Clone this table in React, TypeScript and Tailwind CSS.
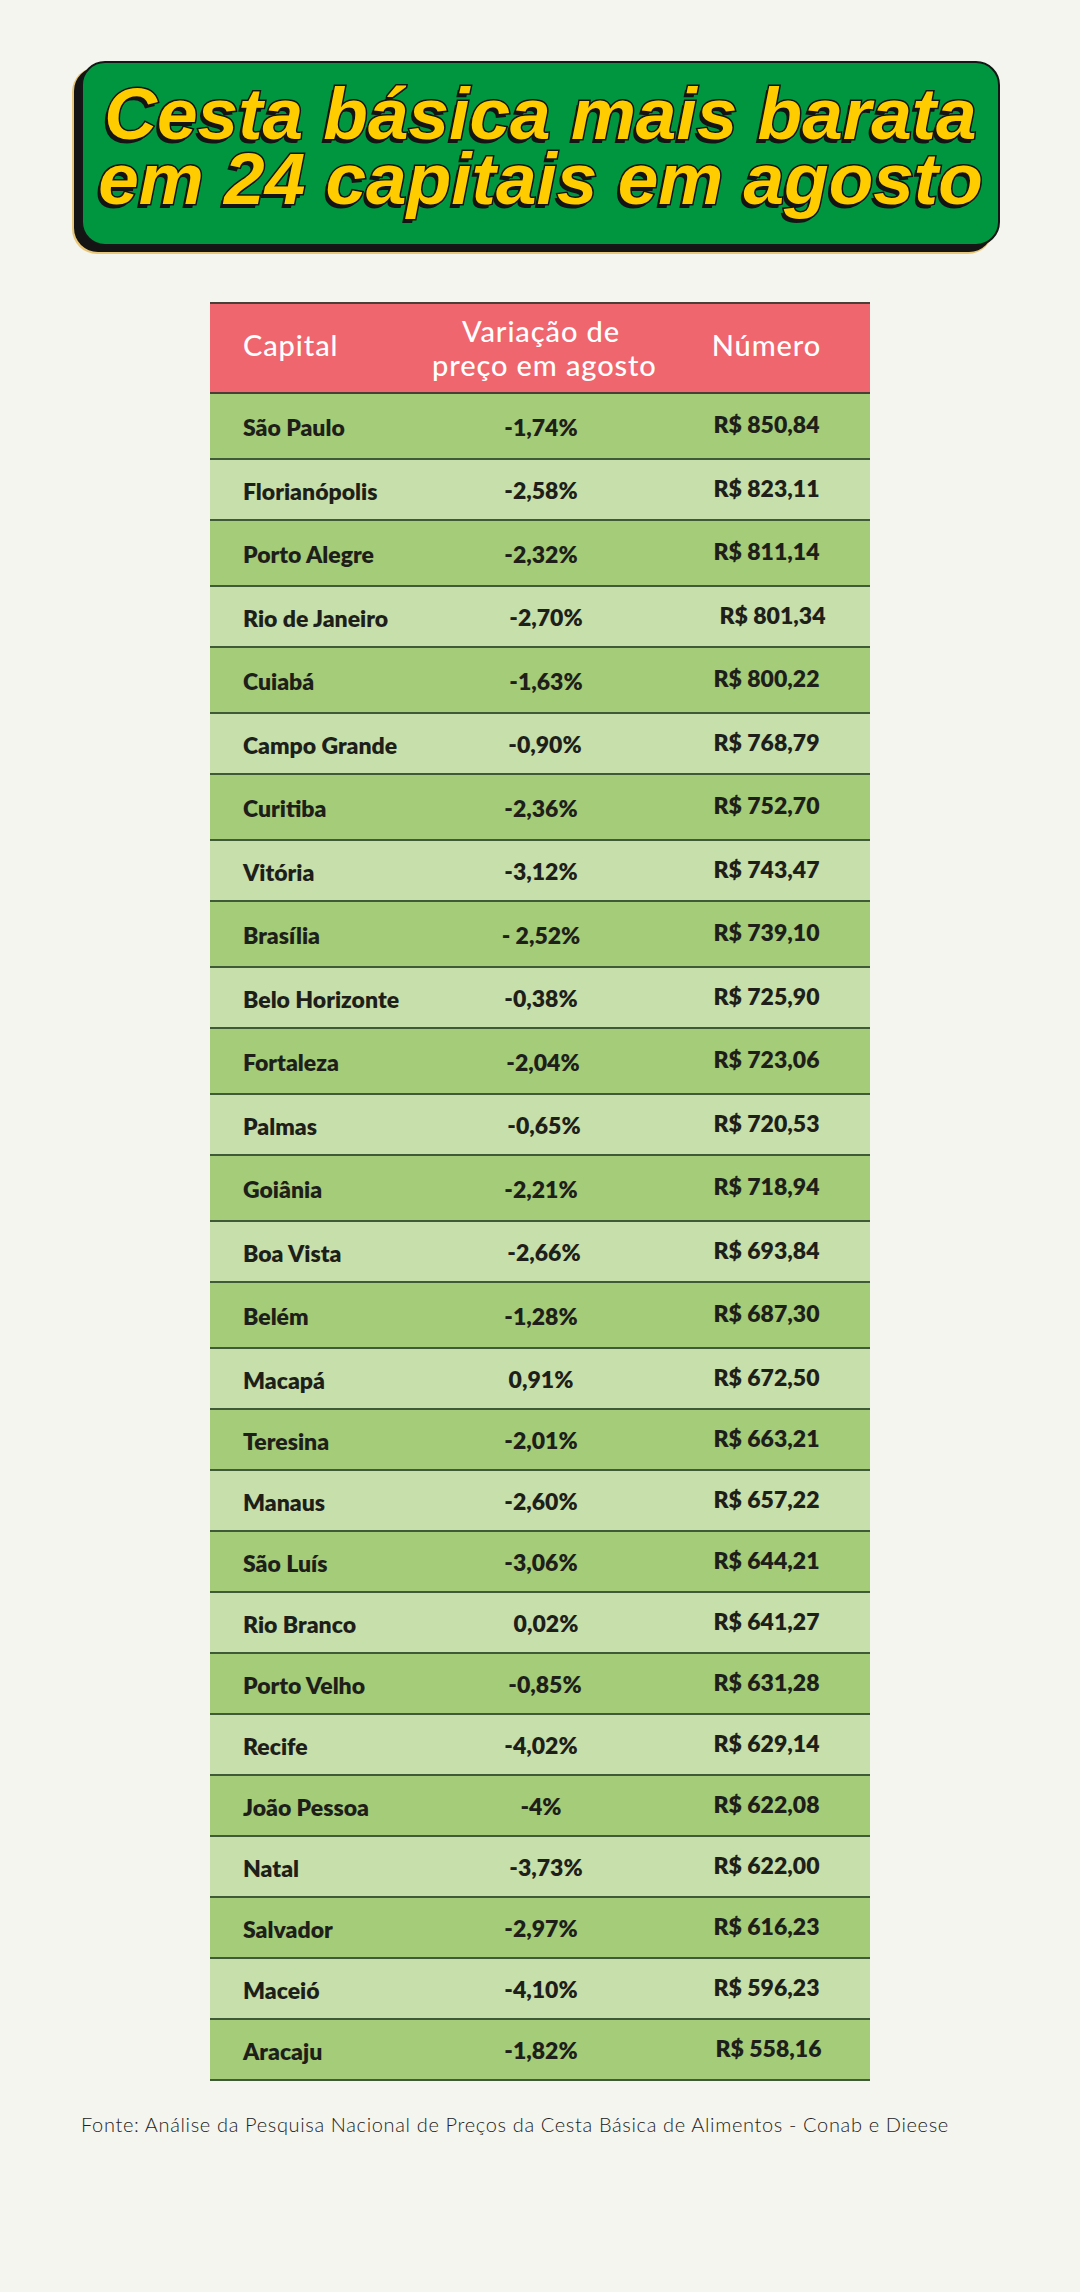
import React from "react";

type Row = {
  city: string;
  change: string;
  price: string;
  tall?: boolean;
  changeShift?: string;
  priceShift?: string;
};

const ROWS: Row[] = [
  { city: "São Paulo", change: "-1,74%", price: "R$ 850,84", tall: true },
  { city: "Florianópolis", change: "-2,58%", price: "R$ 823,11" },
  { city: "Porto Alegre", change: "-2,32%", price: "R$ 811,14", tall: true },
  { city: "Rio de Janeiro", change: "-2,70%", price: "R$ 801,34", changeShift: "pl-[12px]", priceShift: "pl-[25px]" },
  { city: "Cuiabá", change: "-1,63%", price: "R$ 800,22", tall: true, changeShift: "pl-[12px]" },
  { city: "Campo Grande", change: "-0,90%", price: "R$ 768,79", changeShift: "pl-[10px]" },
  { city: "Curitiba", change: "-2,36%", price: "R$ 752,70", tall: true },
  { city: "Vitória", change: "-3,12%", price: "R$ 743,47" },
  { city: "Brasília", change: "- 2,52%", price: "R$ 739,10", tall: true },
  { city: "Belo Horizonte", change: "-0,38%", price: "R$ 725,90" },
  { city: "Fortaleza", change: "-2,04%", price: "R$ 723,06", tall: true, changeShift: "pl-[6px]" },
  { city: "Palmas", change: "-0,65%", price: "R$ 720,53", changeShift: "pl-[8px]" },
  { city: "Goiânia", change: "-2,21%", price: "R$ 718,94", tall: true },
  { city: "Boa Vista", change: "-2,66%", price: "R$ 693,84", changeShift: "pl-[8px]" },
  { city: "Belém", change: "-1,28%", price: "R$ 687,30", tall: true },
  { city: "Macapá", change: "0,91%", price: "R$ 672,50" },
  { city: "Teresina", change: "-2,01%", price: "R$ 663,21" },
  { city: "Manaus", change: "-2,60%", price: "R$ 657,22" },
  { city: "São Luís", change: "-3,06%", price: "R$ 644,21" },
  { city: "Rio Branco", change: "0,02%", price: "R$ 641,27", changeShift: "pl-[12px]" },
  { city: "Porto Velho", change: "-0,85%", price: "R$ 631,28", changeShift: "pl-[10px]" },
  { city: "Recife", change: "-4,02%", price: "R$ 629,14" },
  { city: "João Pessoa", change: "-4%", price: "R$ 622,08" },
  { city: "Natal", change: "-3,73%", price: "R$ 622,00", changeShift: "pl-[12px]" },
  { city: "Salvador", change: "-2,97%", price: "R$ 616,23" },
  { city: "Maceió", change: "-4,10%", price: "R$ 596,23" },
  { city: "Aracaju", change: "-1,82%", price: "R$ 558,16", priceShift: "pl-[17px]" },
];

export default function App() {
  return (
    <div className="min-h-[2292px] w-[1080px] bg-[#f5f5ef] pt-[61px] font-['Lato','Open_Sans',sans-serif] text-[#1f1f1a]">
      {/* Title banner */}
      <div className="ml-[81px] flex h-[185px] w-[919px] flex-col items-center rounded-[24px] border-2 border-[#161616] bg-[#00963f] pt-[18px] shadow-[-7px_6px_0_0_#141414,-8px_7px_0_1px_#e8c77a]">
        <h1 className="flex flex-col items-center font-['Liberation_Sans',Arial,sans-serif] text-[73px] font-bold italic text-[#ffcc00] [-webkit-text-stroke:3px_#141414] [paint-order:stroke_fill] [text-shadow:-3px_4px_0_#141414]">
          <span className="block h-[65px] leading-[65px]">Cesta básica mais barata</span>
          <span className="block h-[65px] leading-[65px]">em 24 capitais em agosto</span>
        </h1>
      </div>

      {/* Table */}
      <div className="ml-[210px] mt-[56px] w-[660px]">
        <div className="grid h-[92px] grid-cols-[220px_220px_220px] items-center border-y-2 border-[#4a3f36] bg-[#ef666e] text-[29px] font-medium leading-[34px] tracking-[0.9px] text-white">
          <div className="pl-[33px] pb-[6px]">Capital</div>
          <div className="pl-[2px] text-center whitespace-nowrap">
            Variação de
            <br />
            preço em agosto
          </div>
          <div className="pl-[13px] pb-[6px] text-center">Número</div>
        </div>

        {ROWS.map((row, i) => (
          <div
            key={row.city}
            className={`grid grid-cols-[220px_220px_220px] items-center border-b-2 border-[#3e5a36] text-[23px] font-extrabold leading-none ${
              row.tall ? "h-[66px]" : "h-[61px]"
            } ${i % 2 === 0 ? "bg-[#a4cc79]" : "bg-[#c7dfab]"}`}
          >
            <div className="pl-[33px] pt-[3px]">{row.city}</div>
            <div className={`text-center pt-[2px] ${row.changeShift ?? "pl-[2px]"}`}>{row.change}</div>
            <div className={`text-center pb-[3px] ${row.priceShift ?? "pl-[13px]"}`}>{row.price}</div>
          </div>
        ))}
      </div>

      {/* Source */}
      <p className="ml-[81px] mt-[31px] text-[20px] font-light leading-[25px] tracking-[0.65px] text-[#222]">
        Fonte: Análise da Pesquisa Nacional de Preços da Cesta Básica de Alimentos - Conab e Dieese
      </p>
    </div>
  );
}
